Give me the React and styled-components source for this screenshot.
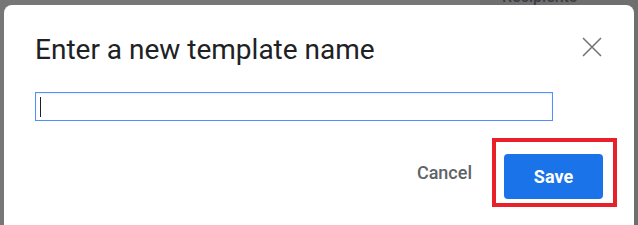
import React from "react"
import styled, { createGlobalStyle } from "styled-components"

const GlobalStyle = createGlobalStyle`
  html, body {
    margin: 0;
    padding: 0;
    background: #777777;
    overflow: hidden;
  }
`

const Backdrop = styled.div`
  position: relative;
  width: 638px;
  height: 225px;
  background: #777777;
  overflow: hidden;
  font-family: Roboto, "Liberation Sans", sans-serif;
`

const BehindPanel = styled.div`
  position: absolute;
  top: 0;
  left: 480px;
  width: 158px;
  height: 225px;
  background: #6f6f6f;
`

const BehindText = styled.span`
  position: absolute;
  top: -13px;
  left: 502px;
  font-size: 16px;
  font-weight: 500;
  color: #3c3c44;
`

const Dialog = styled.div`
  position: relative;
  margin: 5px 0 0 4px;
  width: 630px;
  height: 240px;
  background: #ffffff;
  border-radius: 8px;
  padding: 28px 32px 0 31px;
  box-sizing: border-box;
`

const Header = styled.div`
  display: flex;
  align-items: flex-start;
  justify-content: space-between;
`

const Title = styled.h2`
  margin: 0;
  font-size: 28px;
  line-height: 34px;
  font-weight: 400;
  color: #202124;
`

const CloseButton = styled.button`
  border: 0;
  background: none;
  padding: 0;
  width: 20px;
  height: 20px;
  margin-top: 4px;
  cursor: pointer;
  svg { display: block; }
`

const Input = styled.div`
  margin-top: 25px;
  width: 518px;
  height: 29px;
  box-sizing: border-box;
  border: 1px solid #4d90fe;
  box-shadow: inset 0 1px 2px rgba(0, 0, 0, 0.08);
  display: flex;
  align-items: center;
  padding-left: 4px;
`

const Caret = styled.span`
  width: 1px;
  height: 20px;
  background: #202124;
`

const Footer = styled.div`
  display: flex;
  justify-content: flex-end;
  align-items: center;
  margin-top: 17px;
  margin-right: -15px;
`

const TextButton = styled.button`
  border: 0;
  background: none;
  font-family: Roboto, "Liberation Sans", sans-serif;
  font-size: 18px;
  font-weight: 500;
  color: #5f6368;
  padding: 0;
  margin-right: 20px;
`

const Highlight = styled.div`
  border: 4px solid #e8202a;
  padding: 12px 10px 4px 8px;
`

const PrimaryButton = styled.button`
  width: 99px;
  height: 45px;
  border: 0;
  border-radius: 4px;
  background: #1a73e8;
  color: #ffffff;
  font-family: Roboto, "Liberation Sans", sans-serif;
  font-size: 18px;
  font-weight: 700;
  display: block;
`

export default function App() {
  return (
    <Backdrop>
      <GlobalStyle />
      <BehindPanel />
      <BehindText>Recipients</BehindText>
      <Dialog>
        <Header>
          <Title>Enter a new template name</Title>
          <CloseButton aria-label="Close">
            <svg width="20" height="20" viewBox="0 0 20 20">
              <path d="M1 1L19 19M19 1L1 19" stroke="#757575" strokeWidth="1.6" fill="none" />
            </svg>
          </CloseButton>
        </Header>
        <Input>
          <Caret />
        </Input>
        <Footer>
          <TextButton>Cancel</TextButton>
          <Highlight>
            <PrimaryButton>Save</PrimaryButton>
          </Highlight>
        </Footer>
      </Dialog>
    </Backdrop>
  )
}
